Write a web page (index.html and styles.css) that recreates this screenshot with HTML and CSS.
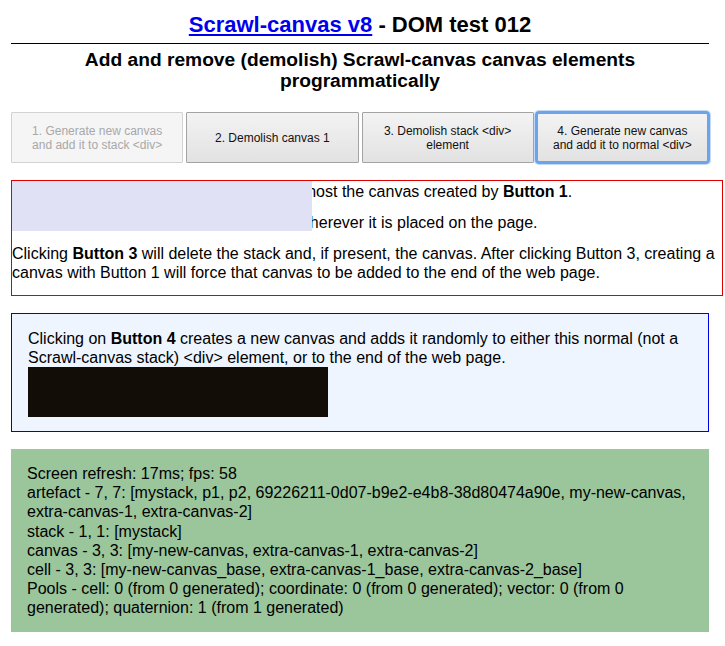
FILE: index.html
```html
<!DOCTYPE html>
<html lang="en">
<head>
<meta charset="utf-8">
<title>Scrawl-canvas v8 - DOM test 012</title>
<link rel="stylesheet" href="styles.css">
</head>
<body>
<h1 class="title"><a class="home" href="#">Scrawl-canvas v8</a> - DOM test 012</h1>
<hr class="rule">
<h2 class="subtitle">Add and remove (demolish) Scrawl-canvas canvas elements programmatically</h2>

<div class="controls">
  <button class="btn btn-disabled" disabled>1. Generate new canvas<br>and add it to stack &lt;div&gt;</button>
  <button class="btn">2. Demolish canvas 1</button>
  <button class="btn">3. Demolish stack &lt;div&gt;<br>element</button>
  <button class="btn btn-focus">4. Generate new canvas<br>and add it to normal &lt;div&gt;</button>
</div>

<div class="stack">
  <p class="stack-p">This stack &lt;div&gt; (with the red border) will host the canvas created by <b>Button 1</b>.</p>
  <p class="stack-p"><b>Button 2</b> will remove that stack canvas, wherever it is placed on the page.</p>
  <p class="stack-p">Clicking <b>Button 3</b> will delete the stack and, if present, the canvas. After clicking Button 3, creating a canvas with Button 1 will force that canvas to be added to the end of the web page.</p>
  <div class="stack-canvas"></div>
</div>

<div class="normal">
  <p class="normal-p">Clicking on <b>Button 4</b> creates a new canvas and adds it randomly to either this normal (not a Scrawl-canvas stack) &lt;div&gt; element, or to the end of the web page.</p>
  <div class="normal-canvas"></div>
</div>

<div class="report">Screen refresh: 17ms; fps: 58<br>artefact - 7, 7: [mystack, p1, p2, 69226211-0d07-b9e2-e4b8-38d80474a90e, my-new-canvas, extra-canvas-1, extra-canvas-2]<br>stack - 1, 1: [mystack]<br>canvas - 3, 3: [my-new-canvas, extra-canvas-1, extra-canvas-2]<br>cell - 3, 3: [my-new-canvas_base, extra-canvas-1_base, extra-canvas-2_base]<br>Pools - cell: 0 (from 0 generated); coordinate: 0 (from 0 generated); vector: 0 (from 0 generated); quaternion: 1 (from 1 generated)</div>
</body>
</html>
```

FILE: styles.css
```css
html, body {
  background: #fff;
}
body {
  margin: 0;
  padding: 0 16px 14px 11px;
  font-family: "Liberation Sans", Arial, sans-serif;
  font-size: 16px;
  color: #000;
}
.title {
  margin: 12px 0 0;
  font-size: 22px;
  font-weight: bold;
  text-align: center;
  line-height: 25px;
}
.home {
  color: #0000ee;
  text-decoration: underline;
}
.rule {
  margin: 6px 0 0;
  border: 0;
  border-top: 1px solid #000;
  height: 0;
}
.subtitle {
  margin: 5px 0 0;
  font-size: 19.2px;
  font-weight: bold;
  text-align: center;
  line-height: 21px;
}
.controls {
  margin-top: 21px;
  display: grid;
  grid-template-columns: repeat(4, 1fr);
  gap: 3px;
}
.btn {
  height: 51px;
  margin: 0;
  padding: 0 4px;
  font-family: "Liberation Sans", Arial, sans-serif;
  font-size: 12px;
  line-height: 14px;
  color: #111;
  background: linear-gradient(#f3f3f3, #e2e2e2);
  border: 1px solid #a3a3a3;
  border-radius: 1px;
  text-align: center;
}
.btn-disabled {
  color: #a8a8a8;
  background: #f5f5f5;
  border-color: #d2d2d2;
}
.btn-focus {
  margin: -1px -1px -1px -2px;
  height: 53px;
  border: 3px solid #6ea3ea;
  border-radius: 4px;
  box-shadow: 0 0 0 1px #c3daf7;
}
.stack {
  position: relative;
  width: 710px;
  margin-top: 17px;
  padding: 1px 0 1px;
  border: 1px solid #e00000;
  line-height: 19px;
}
.stack-p {
  margin: 0 0 12px;
}
.stack-canvas {
  position: absolute;
  left: 0;
  top: 0;
  width: 300px;
  height: 50px;
  background: #e1e1f6;
}
.normal {
  margin-top: 17px;
  padding: 15px 16px 14px;
  border: 1px solid #0000e6;
  background: #eef5ff;
  line-height: 19px;
}
.normal-p {
  margin: 0;
}
.normal-canvas {
  width: 300px;
  height: 50px;
  background: #120e07;
}
.report {
  margin-top: 17px;
  padding: 15px 16px 14px;
  background: #9bc59b;
  line-height: 19.2px;
}
```
